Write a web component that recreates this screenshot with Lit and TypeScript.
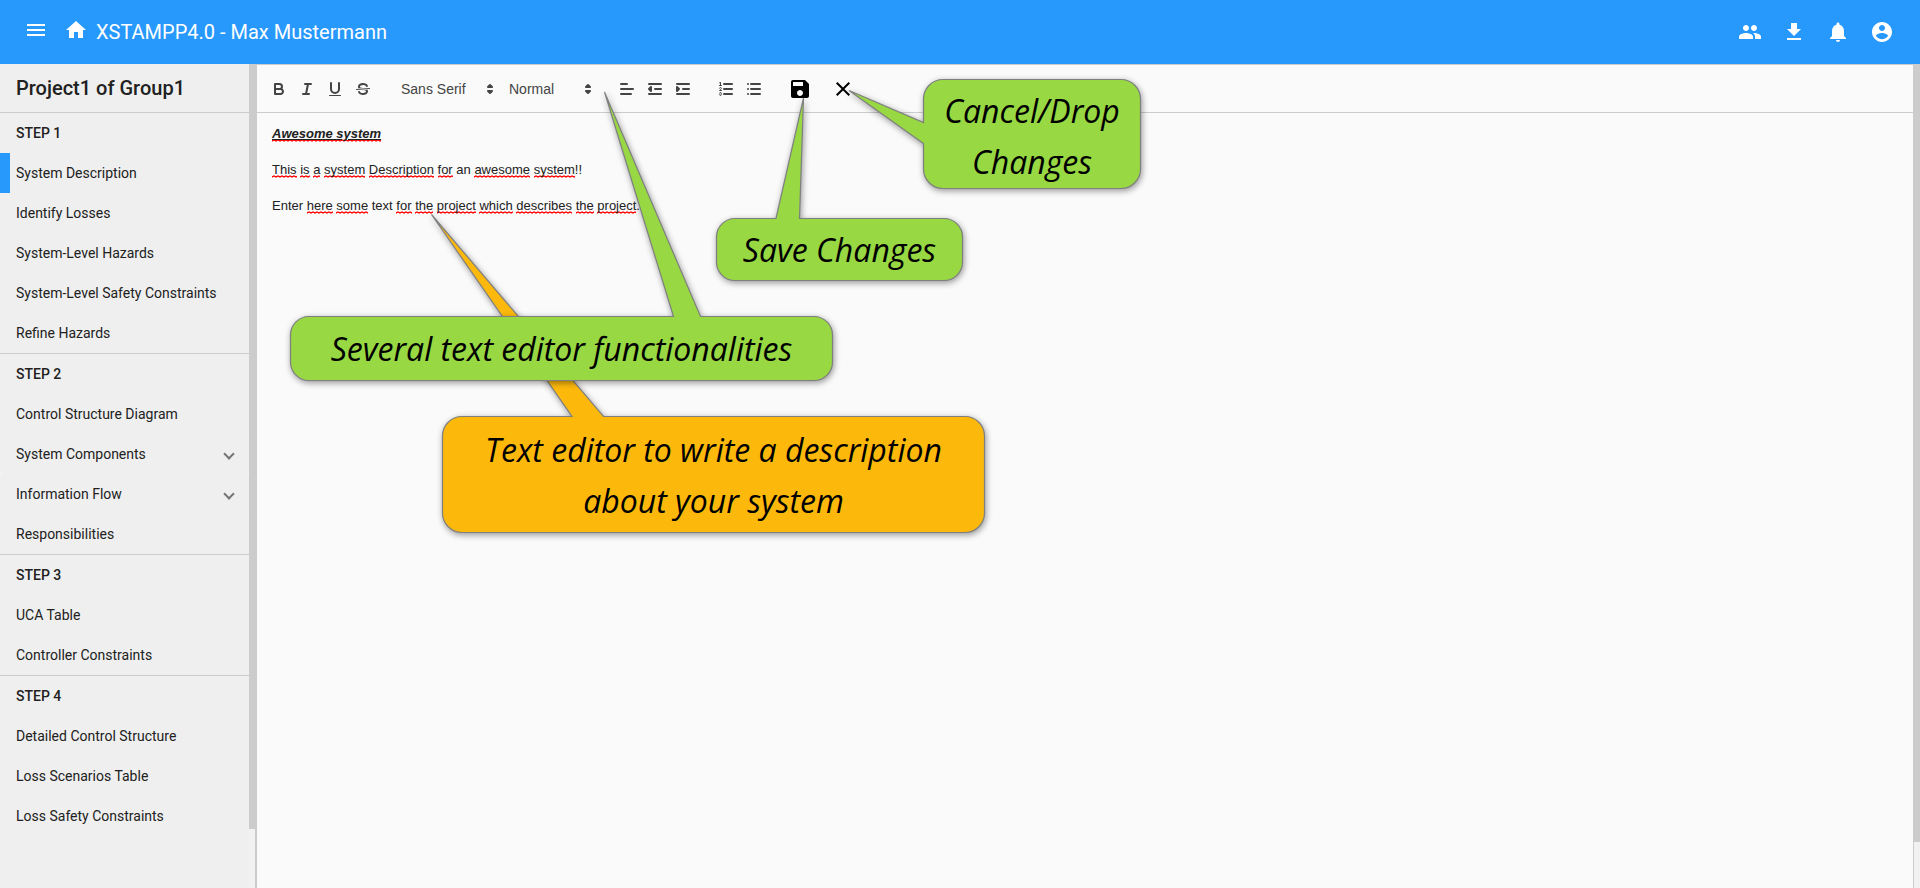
import { LitElement, html, svg, css, SVGTemplateResult } from "lit";
import { customElement, property } from "lit/decorators.js";
import { classMap } from "lit/directives/class-map.js";

interface NavItem {
  label: string;
  active?: boolean;
  expandable?: boolean;
}

interface NavGroup {
  title: string;
  items: NavItem[];
}

const NAV: NavGroup[] = [
  {
    title: "STEP 1",
    items: [
      { label: "System Description", active: true },
      { label: "Identify Losses" },
      { label: "System-Level Hazards" },
      { label: "System-Level Safety Constraints" },
      { label: "Refine Hazards" },
    ],
  },
  {
    title: "STEP 2",
    items: [
      { label: "Control Structure Diagram" },
      { label: "System Components", expandable: true },
      { label: "Information Flow", expandable: true },
      { label: "Responsibilities" },
    ],
  },
  {
    title: "STEP 3",
    items: [{ label: "UCA Table" }, { label: "Controller Constraints" }],
  },
  {
    title: "STEP 4",
    items: [
      { label: "Detailed Control Structure" },
      { label: "Loss Scenarios Table" },
      { label: "Loss Safety Constraints" },
    ],
  },
];

/* Filled 24px glyphs used in the app bar and for save / cancel. */
const GLYPHS: Record<string, string> = {
  menu: "M3 18h18v-2H3v2zm0-5h18v-2H3v2zm0-7v2h18V6H3z",
  home: "M10 20v-6h4v6h5v-8h3L12 3 2 12h3v8z",
  people:
    "M16 11c1.66 0 2.99-1.34 2.99-3S17.66 5 16 5c-1.66 0-3 1.34-3 3s1.34 3 3 3zm-8 0c1.66 0 2.99-1.34 2.99-3S9.66 5 8 5C6.34 5 5 6.34 5 8s1.34 3 3 3zm0 2c-2.33 0-7 1.17-7 3.5V19h14v-2.5c0-2.33-4.67-3.5-7-3.5zm8 0c-.29 0-.62.02-.97.05 1.16.84 1.97 1.97 1.97 3.45V19h6v-2.5c0-2.33-4.67-3.5-7-3.5z",
  download: "M19 9h-4V3H9v6H5l7 7 7-7zM5 18v2h14v-2H5z",
  bell: "M12 22c1.1 0 2-.9 2-2h-4c0 1.1.89 2 2 2zm6-6v-5c0-3.07-1.64-5.64-4.5-6.32V4c0-.83-.67-1.5-1.5-1.5s-1.5.67-1.5 1.5v.68C7.63 5.36 6 7.92 6 11v5l-2 2v1h16v-1l-2-2z",
  account:
    "M12 2C6.48 2 2 6.48 2 12s4.48 10 10 10 10-4.48 10-10S17.52 2 12 2zm0 3c1.66 0 3 1.34 3 3s-1.34 3-3 3-3-1.34-3-3 1.34-3 3-3zm0 14.2c-2.5 0-4.71-1.28-6-3.22.03-1.99 4-3.08 6-3.08 1.99 0 5.97 1.09 6 3.08-1.29 1.94-3.5 3.22-6 3.22z",
  save: "M17 3H5c-1.11 0-2 .9-2 2v14c0 1.1.89 2 2 2h14c1.1 0 2-.9 2-2V7l-4-4zm-5 16c-1.66 0-3-1.34-3-3s1.34-3 3-3 3 1.34 3 3-1.34 3-3 3zm3-10H5V5h10v4z",
  close:
    "M19 6.41L17.59 5 12 10.59 6.41 5 5 6.41 10.59 12 5 17.59 6.41 19 12 13.41 17.59 19 19 17.59 13.41 12z",
};

const glyph = (name: string) =>
  html`<svg class="glyph" viewBox="0 0 24 24" aria-hidden="true"><path d=${GLYPHS[name]}></path></svg>`;

/* Stroked 18px glyphs of the formatting toolbar. */
const FORMAT: Record<string, SVGTemplateResult> = {
  bold: svg`<path class="s" d="M5,4H9.5A2.5,2.5,0,0,1,12,6.5v0A2.5,2.5,0,0,1,9.5,9H5Z"/><path class="s" d="M5,9h5.5A2.5,2.5,0,0,1,13,11.5v0A2.5,2.5,0,0,1,10.5,14H5Z"/>`,
  italic: svg`<path class="s" d="M7,4H13M5,14H11M8,14L10,4"/>`,
  underline: svg`<path class="s" d="M5,3V9a4.012,4.012,0,0,0,4,4H9a4.012,4.012,0,0,0,4-4V3"/><rect class="f" height="1" rx="0.5" ry="0.5" width="12" x="3" y="15"/>`,
  strike: svg`<path class="s thin" d="M15.5,8.5L2.5,9.5"/><path class="f" d="M9.007,8C6.542,7.791,6,7.519,6,6.5,6,5.792,7.283,5,9,5c1.571,0,2.765.679,2.969,1.309a1,1,0,0,0,1.9-.617C13.356,4.106,11.354,3,9,3,6.2,3,4,4.538,4,6.5a3.2,3.2,0,0,0,.5,1.843Z"/><path class="f" d="M8.984,10C11.457,10.208,12,10.479,12,11.5c0,0.708-1.283,1.5-3,1.5-1.571,0-2.765-.679-2.969-1.309a1,1,0,1,0-1.9.617C4.644,13.894,6.646,15,9,15c2.8,0,5-1.538,5-3.5a3.2,3.2,0,0,0-.5-1.843Z"/>`,
  align: svg`<path class="s" d="M3,9H15M3,14H13M3,4H9"/>`,
  outdent: svg`<path class="s" d="M3,14H15M3,4H15M9,9H15"/><path class="s f" d="M5,7V11L3,9Z"/>`,
  indent: svg`<path class="s" d="M3,14H15M3,4H15M9,9H15"/><path class="s f" d="M3,7V11L5,9Z"/>`,
  ordered: svg`<path class="s" d="M7,4H15M7,9H15M7,14H15"/><path class="s thin" d="M2.5,5.5H4.5"/><path class="f" d="M3.5,6A0.5,0.5,0,0,1,3,5.5V3.085l-0.276.138A0.5,0.5,0,0,1,2.053,3c-0.124-.247-0.023-0.324.224-0.447l1-.5A0.5,0.5,0,0,1,4,2.5v3A0.5,0.5,0,0,1,3.5,6Z"/><path class="s thin" d="M4.5,10.5h-2c0-.234,1.85-1.076,1.85-2.234A0.959,0.959,0,0,0,2.5,8.156"/><path class="s thin" d="M2.5,14.846a0.959,0.959,0,0,0,1.85-.109A0.7,0.7,0,0,0,3.75,14a0.688,0.688,0,0,0,.6-0.736,0.959,0.959,0,0,0-1.85-.109"/>`,
  bullet: svg`<path class="s" d="M6,4H15M6,9H15M6,14H15M3,4H3M3,9H3M3,14H3"/>`,
  picker: svg`<path class="s f" d="M7,11L9,13L11,11ZM7,7L9,5L11,7Z"/>`,
};

const formatGlyph = (name: string) =>
  html`<svg class="format-glyph" viewBox="0 0 18 18" aria-hidden="true">${FORMAT[name]}</svg>`;

const formatButton = (name: string, label: string) =>
  html`<button class="format" type="button" aria-label=${label}>${formatGlyph(name)}</button>`;

const glyphStyles = css`
  .glyph {
    display: block;
    width: 24px;
    height: 24px;
    fill: currentColor;
  }
  button {
    border: 0;
    padding: 0;
    margin: 0;
    background: none;
    color: inherit;
    font: inherit;
    cursor: pointer;
  }
`;

@customElement("app-header")
export class AppHeader extends LitElement {
  static styles = [
    glyphStyles,
    css`
      :host {
        display: flex;
        align-items: center;
        justify-content: space-between;
        flex: none;
        height: 64px;
        padding: 0 16px;
        box-sizing: border-box;
        background: #2798fc;
        color: #fff;
        font: 400 20px/32px Roboto, sans-serif;
      }
      .left,
      .right {
        display: flex;
        align-items: center;
      }
      .nav {
        display: grid;
        place-items: center;
        width: 40px;
        height: 44px;
        padding-bottom: 4px;
        box-sizing: border-box;
      }
      h1 {
        margin: 0;
        font: inherit;
      }
      .action {
        display: grid;
        place-items: center;
        width: 44px;
        height: 44px;
      }
    `,
  ];

  render() {
    return html`
      <div class="left">
        <button class="nav" type="button" aria-label="Toggle menu">${glyph("menu")}</button>
        <button class="nav" type="button" aria-label="Home">${glyph("home")}</button>
        <h1>XSTAMPP4.0 - Max Mustermann</h1>
      </div>
      <div class="right">
        <button class="action" type="button" aria-label="Users">${glyph("people")}</button>
        <button class="action" type="button" aria-label="Download">${glyph("download")}</button>
        <button class="action" type="button" aria-label="Notifications">${glyph("bell")}</button>
        <button class="action" type="button" aria-label="Account">${glyph("account")}</button>
      </div>
    `;
  }
}

@customElement("app-sidebar")
export class AppSidebar extends LitElement {
  static styles = css`
    :host {
      display: flex;
      flex: none;
      width: 257px;
      box-sizing: border-box;
      border-right: 2px solid #ccc;
      background: #efefef;
      color: #212121;
      font: 400 14px/40px Roboto, sans-serif;
    }
    nav {
      flex: 1;
      min-width: 0;
    }
    h2 {
      margin: 0;
      padding: 0 16px;
      font: 500 20px/48px Roboto, sans-serif;
    }
    section {
      border-top: 1px solid #ccc;
    }
    h3 {
      margin: 0;
      padding: 0 16px;
      font: inherit;
      font-weight: 500;
    }
    ul {
      margin: 0;
      padding: 0;
      list-style: none;
    }
    a {
      display: flex;
      align-items: center;
      justify-content: space-between;
      padding: 0 16px;
      color: inherit;
      text-decoration: none;
    }
    .active {
      padding-left: 6px;
      border-left: 10px solid #2798fc;
    }
    .expandable {
      background: #f4f4f4;
    }
    .expandable a {
      border-radius: 4px;
      background: #efefef;
    }
    .chevron {
      width: 6px;
      height: 6px;
      border: solid #757575;
      border-width: 0 2px 2px 0;
      transform: rotate(45deg);
    }
    .track {
      width: 6px;
      background: #f1f1f1;
    }
    .thumb {
      height: calc(100% - 59px);
      background: #ccc;
    }
  `;

  render() {
    return html`
      <nav>
        <h2>Project1 of Group1</h2>
        ${NAV.map(
          (group) => html`<section>
            <h3>${group.title}</h3>
            <ul>
              ${group.items.map(
                (item) => html`<li class=${classMap({ expandable: !!item.expandable })}>
                  <a href="#" class=${classMap({ active: !!item.active })}>
                    ${item.label}${item.expandable ? html`<span class="chevron"></span>` : ""}
                  </a>
                </li>`
              )}
            </ul>
          </section>`
        )}
      </nav>
      <div class="track" aria-hidden="true"><div class="thumb"></div></div>
    `;
  }
}

@customElement("text-editor")
export class TextEditor extends LitElement {
  static styles = [
    glyphStyles,
    css`
      :host {
        display: flex;
        flex: 1;
        min-width: 0;
        background: #fafafa;
        color: #212121;
        font-family: "Liberation Sans", Arial, sans-serif;
      }
      .editor {
        flex: 1;
        min-width: 0;
        border-top: 1px solid #ccc;
        border-right: 1px solid #ccc;
      }
      .toolbar {
        display: flex;
        align-items: center;
        gap: 15px;
        height: 47px;
        padding: 0 8px;
        border-bottom: 1px solid #ccc;
        color: #444;
      }
      .group {
        display: flex;
        align-items: center;
      }
      .format {
        width: 28px;
        height: 24px;
        padding: 3px 5px;
      }
      .format-glyph {
        display: block;
        width: 18px;
        height: 18px;
      }
      .s {
        fill: none;
        stroke: #444;
        stroke-width: 2;
        stroke-linecap: round;
        stroke-linejoin: round;
      }
      .thin {
        stroke-width: 1;
      }
      .f {
        fill: #444;
      }
      .picker {
        display: grid;
        grid-template-columns: 1fr 18px;
        align-items: center;
        height: 24px;
        padding: 0 1px;
        box-sizing: border-box;
      }
      .font {
        width: 108px;
      }
      .size {
        width: 98px;
      }
      .picker select {
        grid-area: 1 / 1 / 2 / 3;
        appearance: none;
        width: 100%;
        height: 24px;
        padding: 0 8px;
        border: 0;
        background: none;
        color: #444;
        font: 400 14px/24px "Liberation Sans", Arial, sans-serif;
      }
      .picker .format-glyph {
        grid-area: 1 / 2;
        pointer-events: none;
      }
      .commands {
        gap: 9px;
        color: #000;
      }
      .command {
        display: grid;
        place-items: center;
        width: 34px;
        height: 24px;
      }
      .content {
        display: flex;
        flex-direction: column;
        gap: 18px;
        padding: 12px 15px;
        outline: none;
        font-size: 13px;
        line-height: 18px;
      }
      p {
        margin: 0;
      }
      .title {
        font-weight: 700;
        font-style: italic;
        text-decoration: underline;
      }
      .typo {
        padding-bottom: 1px;
        background: url("data:image/svg+xml,%3Csvg xmlns='http://www.w3.org/2000/svg' width='4' height='3'%3E%3Cpath d='M-1 1L0 2L2 1L4 2L5 1' fill='none' stroke='%23f00' stroke-width='1.3'/%3E%3C/svg%3E")
          left bottom repeat-x;
      }
      .track {
        width: 6px;
        background: #f1f1f1;
      }
      .thumb {
        height: calc(100% - 46px);
        background: #ccc;
      }
    `,
  ];

  private words(line: string) {
    return line
      .split(/(\[[^\]]+\])/)
      .map((part) => (part.startsWith("[") ? html`<span class="typo">${part.slice(1, -1)}</span>` : part));
  }

  render() {
    return html`
      <div class="editor">
        <div class="toolbar" role="toolbar" aria-label="Formatting">
          <div class="group">
            ${formatButton("bold", "Bold")}${formatButton("italic", "Italic")}
            ${formatButton("underline", "Underline")}${formatButton("strike", "Strikethrough")}
          </div>
          <div class="group">
            <label class="picker font">
              <select aria-label="Font">
                <option>Sans Serif</option>
                <option>Serif</option>
                <option>Monospace</option>
              </select>
              ${formatGlyph("picker")}
            </label>
            <label class="picker size">
              <select aria-label="Size">
                <option>Normal</option>
                <option>Small</option>
                <option>Large</option>
                <option>Huge</option>
              </select>
              ${formatGlyph("picker")}
            </label>
          </div>
          <div class="group">
            ${formatButton("align", "Align")}${formatButton("outdent", "Decrease indent")}
            ${formatButton("indent", "Increase indent")}
          </div>
          <div class="group">
            ${formatButton("ordered", "Numbered list")}${formatButton("bullet", "Bulleted list")}
          </div>
          <div class="group commands">
            <button class="command" type="button" aria-label="Save">${glyph("save")}</button>
            <button class="command" type="button" aria-label="Cancel">${glyph("close")}</button>
          </div>
        </div>
        <div class="content" contenteditable="true" spellcheck="false" role="textbox" aria-multiline="true" aria-label="System description">
          <p><span class="title">${this.words("[Awesome system]")}</span></p>
          <p>${this.words("[This] [is] [a] [system] [Description] [for] an [awesome] [system]!!")}</p>
          <p>${this.words("Enter [here] [some] text [for] [the] [project] [which] [describes] [the] [project].")}</p>
        </div>
      </div>
      <div class="track" aria-hidden="true"><div class="thumb"></div></div>
    `;
  }
}

/* A speech bubble whose outline, tail included, is one path. */
@customElement("call-out")
export class CallOut extends LitElement {
  @property() outline = "";

  static styles = css`
    :host {
      display: grid;
      place-items: center;
      color: #000;
      font: italic 400 32px/51px "Segoe Print", "Open Sans", sans-serif;
      text-align: center;
      white-space: nowrap;
      pointer-events: none;
    }
    svg {
      position: absolute;
      top: 0;
      left: 0;
      width: 100%;
      height: 100%;
      overflow: visible;
      filter: drop-shadow(1px 2px 3px rgba(0, 0, 0, 0.4));
    }
    path {
      fill: var(--bubble);
      stroke: #7f7f7f;
      stroke-width: 1.2;
    }
    .text {
      position: relative;
    }
  `;

  render() {
    return html`
      <svg aria-hidden="true"><path d=${this.outline}></path></svg>
      <div class="text"><slot></slot></div>
    `;
  }
}

@customElement("app-root")
export class AppRoot extends LitElement {
  static styles = css`
    :host {
      position: relative;
      display: flex;
      flex-direction: column;
      min-height: 100vh;
      overflow: hidden;
    }
    .body {
      display: flex;
      flex: 1;
    }
    call-out {
      position: absolute;
      --bubble: #97d843;
    }
    .describe {
      --bubble: #fdb90b;
      left: 442px;
      top: 416px;
      width: 543px;
      height: 117px;
    }
    .functions {
      left: 290px;
      top: 316px;
      width: 543px;
      height: 65px;
    }
    .save {
      left: 716px;
      top: 218px;
      width: 247px;
      height: 63px;
    }
    .cancel {
      left: 923px;
      top: 79px;
      width: 218px;
      height: 110px;
      padding-top: 4px;
      box-sizing: border-box;
    }
  `;

  render() {
    return html`
      <app-header></app-header>
      <div class="body">
        <app-sidebar></app-sidebar>
        <text-editor></text-editor>
      </div>
      <call-out
        class="describe"
        outline="M20 .5H130L-10.5 -201.5L161.5 .5H523A19.5 19.5 0 0 1 542.5 20V97A19.5 19.5 0 0 1 523 116.5H20A19.5 19.5 0 0 1 .5 97V20A19.5 19.5 0 0 1 20 .5Z"
        >Text editor to write a description<br />about your system</call-out
      >
      <call-out
        class="functions"
        outline="M19 .5H383.5L314.5 -224L410.5 .5H524A18.5 18.5 0 0 1 542.5 19V46A18.5 18.5 0 0 1 524 64.5H19A18.5 18.5 0 0 1 .5 46V19A18.5 18.5 0 0 1 19 .5Z"
        >Several text editor functionalities</call-out
      >
      <call-out
        class="save"
        outline="M19 .5H60L87.5 -120L83.5 .5H228A18.5 18.5 0 0 1 246.5 19V44A18.5 18.5 0 0 1 228 62.5H19A18.5 18.5 0 0 1 .5 44V19A18.5 18.5 0 0 1 19 .5Z"
        >Save Changes</call-out
      >
      <call-out
        class="cancel"
        outline="M20 .5H198A19.5 19.5 0 0 1 217.5 20V90A19.5 19.5 0 0 1 198 109.5H20A19.5 19.5 0 0 1 .5 90V64.5L-74 11.5L.5 43.5V20A19.5 19.5 0 0 1 20 .5Z"
        >Cancel/Drop<br />Changes</call-out
      >
    `;
  }
}
